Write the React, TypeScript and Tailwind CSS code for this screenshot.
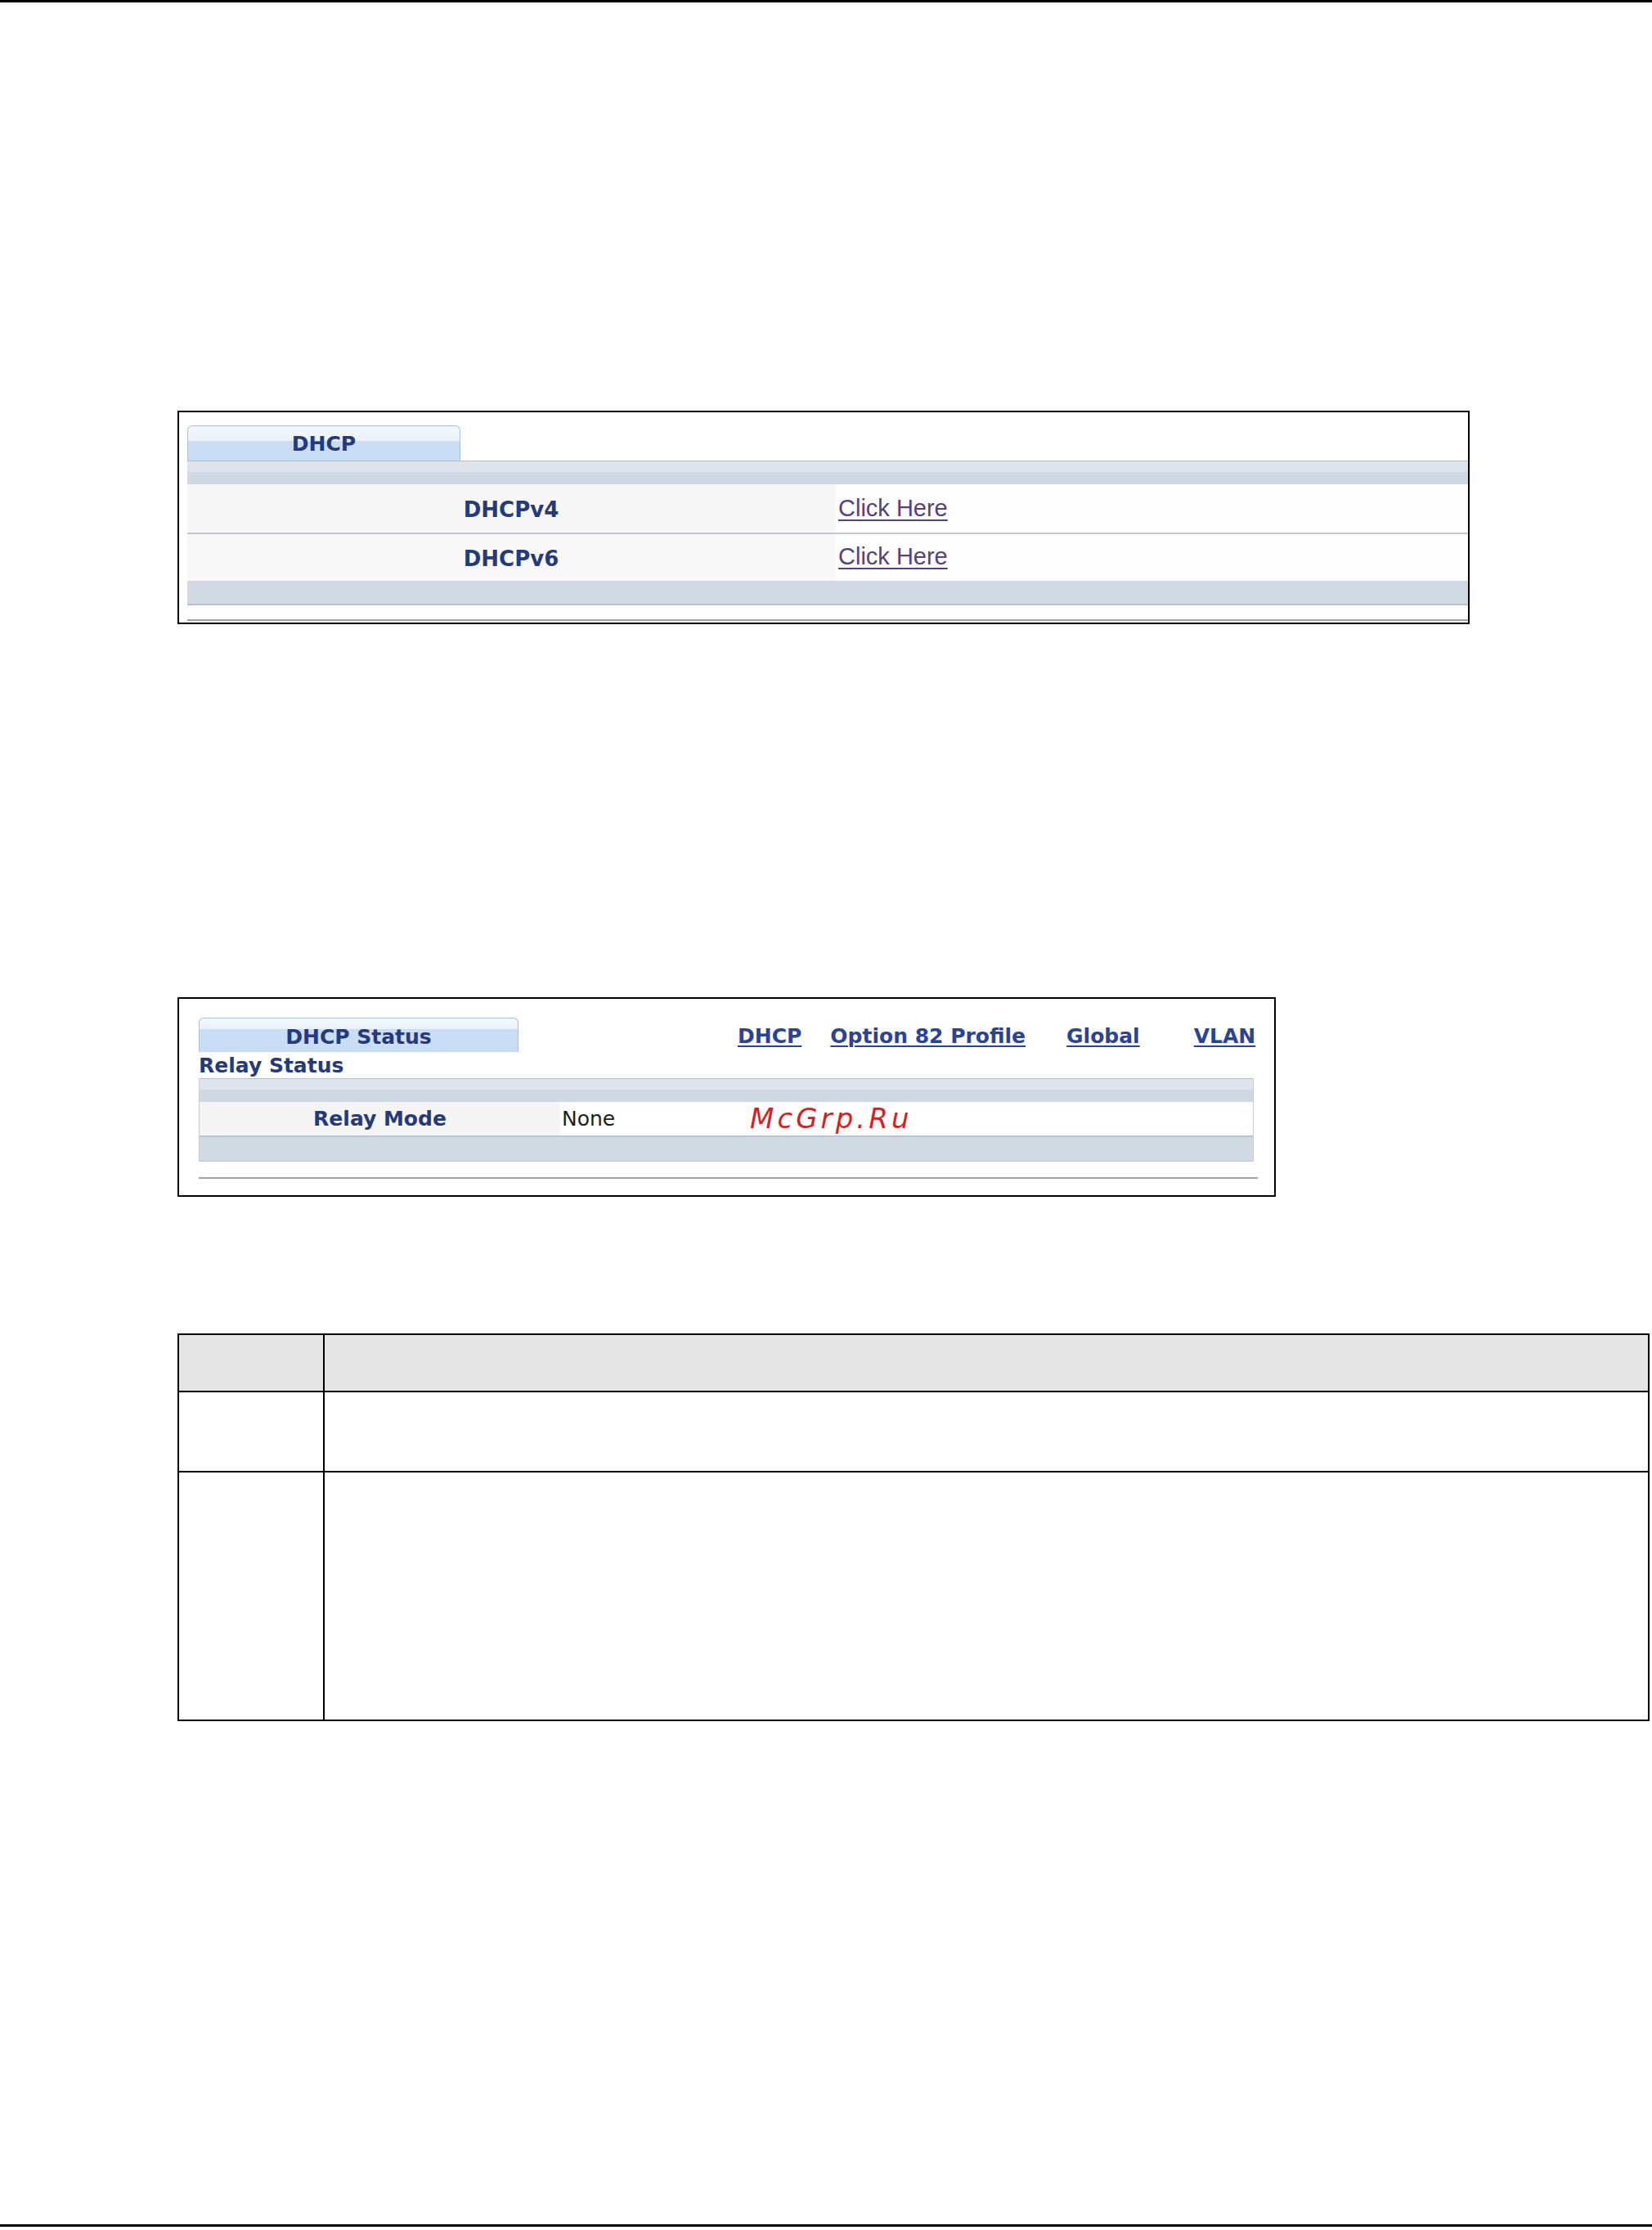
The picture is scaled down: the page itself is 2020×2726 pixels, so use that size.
import React from 'react'

const bold = "font-['DejaVu_Sans',Verdana,sans-serif] font-bold text-[25px] leading-none text-[#26397a] whitespace-nowrap"
const link = "font-['DejaVu_Sans',Verdana,sans-serif] font-bold text-[25px] leading-none text-[#2a4494] underline decoration-2 underline-offset-[3px] whitespace-nowrap shrink-0"
const clickHere = "font-['Liberation_Sans',Arial,sans-serif] text-[29px] leading-none text-[#56427a] underline decoration-2 underline-offset-[4px] whitespace-nowrap"

function Band() {
  return (
    <div className="h-[29px] flex flex-col">
      <div className="h-px bg-[#b7bdc9]" />
      <div className="h-[13px] bg-[#dfe4ec]" />
      <div className="flex-1 bg-[#d0d8e3]" />
    </div>
  )
}

function DhcpBox() {
  return (
    <div className="ml-[217px] w-[1580px] h-[261px] border-2 border-black flex flex-col pl-[10px] pt-[16px]">
      <div className="w-[334px] h-[43px] rounded-t-[6px] border border-b-0 border-[#a9c0de] bg-[linear-gradient(to_bottom,#f4f8fd_0%,#eaf1fa_44%,#c9ddf4_44%,#c9ddf4_100%)] flex justify-center pt-[9px]">
        <span className={bold}>DHCP</span>
      </div>
      <Band />
      <div className="h-[59px] flex">
        <div className="w-[792px] bg-[#f6f6f6] flex justify-center pt-[18px]">
          <span className={`${bold} text-[26px]`}>DHCPv4</span>
        </div>
        <div className="flex-1 bg-[#fdfdfd] pl-[4px] pt-[15px]">
          <a className={clickHere}>Click Here</a>
        </div>
      </div>
      <div className="h-[2px] bg-[#c3c7cf]" />
      <div className="h-[57px] flex">
        <div className="w-[792px] bg-[#f8f8f8] flex justify-center pt-[17px]">
          <span className={`${bold} text-[26px]`}>DHCPv6</span>
        </div>
        <div className="flex-1 bg-[#fefefe] pl-[4px] pt-[13px]">
          <a className={clickHere}>Click Here</a>
        </div>
      </div>
      <div className="h-[28px] bg-[#d1d9e3]" />
      <div className="h-[2px] bg-[#b9bfca]" />
      <div className="h-[17px] bg-[#fdfefd]" />
      <div className="h-[2px] bg-[#9f9f9a]" />
    </div>
  )
}

function RelayBox() {
  return (
    <div className="relative ml-[217px] w-[1343px] h-[244px] border-2 border-black flex flex-col pl-[24px] pr-[25px] pt-[23px]">
      <div className="h-[42px] flex">
        <div className="w-[391px] h-[42px] shrink-0 rounded-t-[6px] border border-b-0 border-[#a9c0de] bg-[linear-gradient(to_bottom,#f4f8fd_0%,#eaf1fa_31%,#c9ddf4_31%,#c9ddf4_100%)] flex justify-center pt-[10px]">
          <span className={bold}>DHCP Status</span>
        </div>
        <div className="flex flex-none pt-[10px]">
          <a className={`${link} ml-[268px]`}>DHCP</a>
          <a className={`${link} ml-[35px]`}>Option 82 Profile</a>
          <a className={`${link} ml-[50px]`}>Global</a>
          <a className={`${link} ml-[66px]`}>VLAN</a>
        </div>
      </div>
      <div className="h-[32px] flex items-center">
        <span className={bold}>Relay Status</span>
      </div>
      <div className="border-x border-[#c4ccd8] flex flex-col">
        <Band />
        <div className="h-[41px] flex">
          <div className="w-[441px] bg-[#f5f5f5] flex justify-center pt-[8px]">
            <span className={bold}>Relay Mode</span>
          </div>
          <div className="flex-1 bg-white pl-[2px] pt-[8px]">
            <span className="font-['DejaVu_Sans',Verdana,sans-serif] text-[25px] leading-none text-[#1e1e1e]">None</span>
          </div>
        </div>
        <div className="h-[2px] bg-[#bcc5d2]" />
        <div className="h-[29px] bg-[#d1d9e3]" />
        <div className="h-px bg-[#c0c8d4]" />
      </div>
      <div className="h-[19px]" />
      <div className="h-[2px] w-[1295px] bg-[#a3a3a3]" />
      <span className="absolute left-[698px] top-[129px] font-['DejaVu_Sans',Verdana,sans-serif] italic text-[34px] leading-none tracking-[0.12em] text-[#d42222] whitespace-nowrap">
        McGrp.Ru
      </span>
    </div>
  )
}

function RefTable() {
  return (
    <div className="ml-[217px] w-[1800px] border-2 border-black flex flex-col">
      <div className="h-[70px] flex bg-[#e5e5e5] border-b-2 border-black">
        <div className="w-[178px] border-r-2 border-black" />
        <div className="flex-1" />
      </div>
      <div className="h-[98px] flex border-b-2 border-black">
        <div className="w-[178px] border-r-2 border-black" />
        <div className="flex-1" />
      </div>
      <div className="h-[302px] flex">
        <div className="w-[178px] border-r-2 border-black" />
        <div className="flex-1" />
      </div>
    </div>
  )
}

export default function App() {
  return (
    <div className="w-[2020px] h-[2726px] bg-white flex flex-col">
      <div className="h-[3px] bg-black" />
      <div className="mt-[499px]">
        <DhcpBox />
      </div>
      <div className="mt-[456px]">
        <RelayBox />
      </div>
      <div className="mt-[167px]">
        <RefTable />
      </div>
      <div className="mt-[615px] h-[3px] bg-black" />
    </div>
  )
}
